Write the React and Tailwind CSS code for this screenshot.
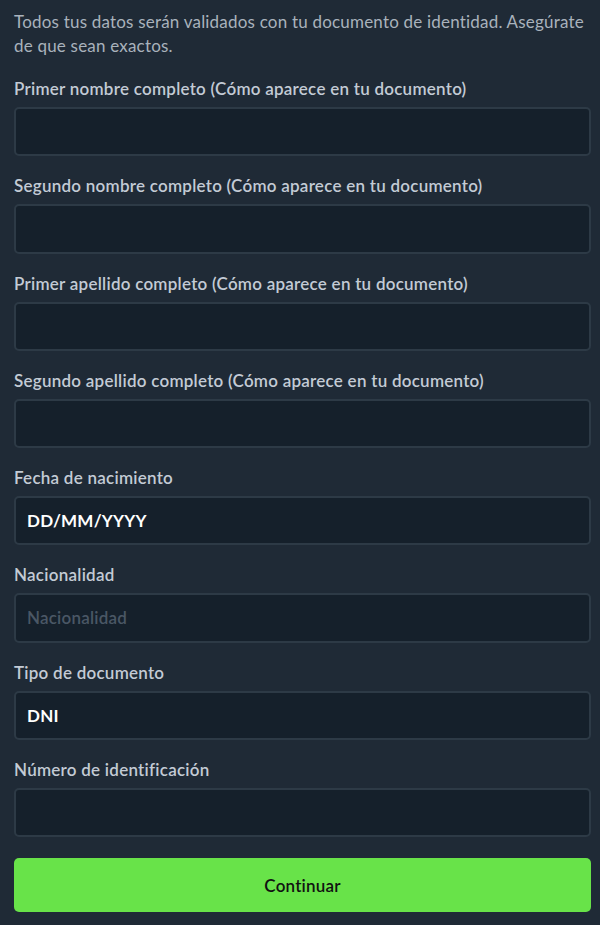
import React from "react";

const fields = [
  { label: "Primer nombre completo (Cómo aparece en tu documento)" },
  { label: "Segundo nombre completo (Cómo aparece en tu documento)" },
  { label: "Primer apellido completo (Cómo aparece en tu documento)" },
  { label: "Segundo apellido completo (Cómo aparece en tu documento)" },
  { label: "Fecha de nacimiento", value: "DD/MM/YYYY" },
  { label: "Nacionalidad", placeholder: "Nacionalidad" },
  { label: "Tipo de documento", value: "DNI" },
  { label: "Número de identificación" },
];

export default function App() {
  return (
    <div
      className="w-[600px] h-[925px] bg-[#1f2a36] pl-[14px] pr-[9px] pt-[10px] overflow-hidden"
      style={{ fontFamily: "Lato, 'Noto Sans', sans-serif" }}
    >
      <p className="text-[17px] leading-[24px] tracking-[0.2px] text-[#a9b2bc] mb-[19px]">
        Todos tus datos serán validados con tu documento de identidad. Asegúrate de que sean exactos.
      </p>
      <div className="flex flex-col gap-[18px]">
        {fields.map((f, i) => (
          <div key={i}>
            <div className="text-[17px] leading-[24px] tracking-[0.25px] font-semibold text-[#c3cbd5] mb-[6px]">
              {f.label}
            </div>
            <div className="h-[49.3px] rounded-[5px] border-2 border-[#2d3a46] bg-[#15202b] flex items-center px-[11px]">
              {f.value && (
                <span className="text-[17px] tracking-[0.2px] font-bold text-white">{f.value}</span>
              )}
              {f.placeholder && (
                <span className="text-[17px] tracking-[0.2px] font-semibold text-[#4a5765]">{f.placeholder}</span>
              )}
            </div>
          </div>
        ))}
      </div>
      <button className="mt-[21px] w-full h-[54px] rounded-[5px] bg-[#68e349] text-[17px] tracking-[0.2px] font-semibold text-[#111] flex items-center justify-center">
        Continuar
      </button>
    </div>
  );
}
